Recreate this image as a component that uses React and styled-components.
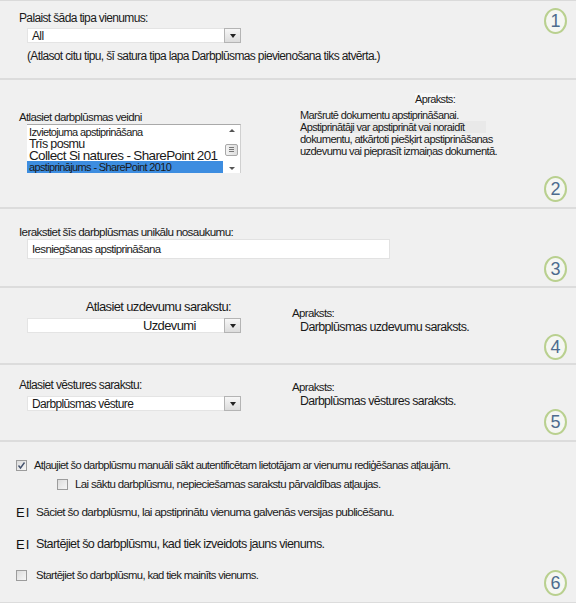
import React from "react";
import styled, { createGlobalStyle } from "styled-components";

const GlobalStyle = createGlobalStyle`
  html, body {
    margin: 0;
    padding: 0;
    background: #f0f0f0;
  }
  body {
    font-family: "Liberation Sans", Arial, sans-serif;
    letter-spacing: -0.04em;
    color: #1a1a1a;
  }
`;

const Page = styled.div`
  width: 576px;
  height: 603px;
  overflow: hidden;
  background: #f0f0f0;
  border-top: 1px solid #dadada;
  box-sizing: border-box;
`;

const Section = styled.section`
  position: relative;
  box-sizing: border-box;
  height: ${p => p.h}px;
  padding: ${p => p.pad || "0"};
  border-bottom: 2px solid #dcdcdc;
`;

const Badge = styled.div`
  position: absolute;
  right: 9px;
  ${p => (p.top ? `top: ${p.top}px;` : `bottom: ${p.bottom}px;`)}
  width: 19px;
  height: 22px;
  border: 2px solid #b9d08f;
  border-radius: 50%;
  background: #f5f6f2;
  color: #4d6c8e;
  font-size: 18px;
  line-height: 22px;
  letter-spacing: 0;
  text-align: center;
`;

const Label = styled.div`
  font-size: ${p => p.size || 12}px;
  line-height: ${p => p.lh || 14}px;
  margin: ${p => p.m || "0"};
  text-align: ${p => p.align || "left"};
  width: ${p => (p.w ? `${p.w}px` : "auto")};
  white-space: nowrap;
`;

const Select = styled.div`
  display: flex;
  align-items: center;
  box-sizing: border-box;
  width: ${p => p.w || 214}px;
  height: 15px;
  margin: ${p => p.m || "0 0 0 8px"};
  background: #fff;
  border: 1px solid #e4e4e4;
  font-size: ${p => p.size || 12}px;
`;

const SelectValue = styled.span`
  flex: 1;
  padding-left: ${p => p.pl || 4}px;
  white-space: nowrap;
  overflow: hidden;
`;

const ArrowBtn = styled.span`
  display: flex;
  align-items: center;
  justify-content: center;
  box-sizing: border-box;
  width: 17px;
  height: 15px;
  margin-right: -1px;
  border: 1px solid #b4b4b4;
  background: linear-gradient(#f7f7f7, #dcdcdc);
  &::after {
    content: "";
    border-left: 3px solid transparent;
    border-right: 3px solid transparent;
    border-top: 4px solid #222;
  }
`;

const TextBox = styled.div`
  box-sizing: border-box;
  width: 363px;
  height: 20px;
  margin-left: 8px;
  padding: 3px 4px;
  background: #fff;
  border: 1px solid #e2e2e2;
  font-size: 11.5px;
  line-height: 13px;
`;

const Columns = styled.div`
  display: grid;
  grid-template-columns: ${p => p.cols};
  align-items: start;
`;

const ListBox = styled.div`
  display: flex;
  box-sizing: border-box;
  width: 214px;
  height: 49px;
  margin-left: 8px;
  background: #fff;
  border-top: 1px solid #a9a9a9;
  border-right: 1px solid #d0d0d0;
`;

const Options = styled.div`
  flex: 1;
  display: flex;
  flex-direction: column;
  padding-top: 1px;
  overflow: hidden;
`;

const Option = styled.div`
  height: 12px;
  line-height: 12px;
  font-size: ${p => p.size}px;
  padding-left: 2px;
  white-space: nowrap;
  overflow: hidden;
  background: ${p => (p.selected ? "#3d8de0" : "transparent")};
`;

const ScrollBar = styled.div`
  width: 17px;
  display: flex;
  flex-direction: column;
  align-items: center;
  justify-content: space-between;
  padding: 4px 0 3px;
  box-sizing: border-box;
`;

const ScrollArrow = styled.span`
  border-left: 3px solid transparent;
  border-right: 3px solid transparent;
  ${p => (p.up ? "border-bottom: 3px solid #555;" : "border-top: 3px solid #555;")}
`;

const Thumb = styled.span`
  box-sizing: border-box;
  width: 13px;
  height: 12px;
  border: 1px solid #a8a8a8;
  border-radius: 2px;
  background: linear-gradient(90deg, #f2f2f2, #dedede);
  display: flex;
  flex-direction: column;
  justify-content: center;
  align-items: center;
  gap: 1px;
  & > i {
    display: block;
    width: 5px;
    height: 1px;
    background: #777;
  }
`;

const Desc = styled.div`
  font-size: ${p => p.size || 12}px;
  line-height: ${p => p.lh || 13}px;
  margin: ${p => p.m || "0"};
  white-space: nowrap;
`;

const Highlight = styled.span`
  background: ${p => p.bg};
  padding-right: ${p => p.pr || 0}px;
`;

const OptionRow = styled.div`
  display: flex;
  align-items: center;
  gap: ${p => p.gap || 7}px;
  height: ${p => p.h || 18}px;
  margin: ${p => p.m || "0"};
  font-size: ${p => p.size || 11.5}px;
  white-space: nowrap;
`;

const Check = styled.span`
  box-sizing: border-box;
  width: 11px;
  height: 11px;
  flex: none;
  border: 1px solid #9c9c9c;
  background: linear-gradient(135deg, #dcdcdc, #f6f6f6);
  display: flex;
  align-items: center;
  justify-content: center;
`;

const Glyph = styled.span`
  width: 13px;
  flex: none;
  font-size: 13px;
  letter-spacing: 1px;
  color: #111;
`;

const Checked = () => (
  <Check>
    <svg width="9" height="9" viewBox="0 0 9 9">
      <path d="M1.5 4.5 L3.5 7 L7.5 1.5" fill="none" stroke="#44526d" strokeWidth="1.4" />
    </svg>
  </Check>
);

export default function App() {
  return (
    <>
      <GlobalStyle />
      <Page>
        <Section h={79} pad="10px 0 0 19px">
          <Label>Palaist šāda tipa vienumus:</Label>
          <Select m="3px 0 0 8px">
            <SelectValue>All</SelectValue>
            <ArrowBtn />
          </Select>
          <Label m="6px 0 0 8px">(Atlasot citu tipu, šī satura tipa lapa Darbplūsmas pievienošana tiks atvērta.)</Label>
          <Badge top={7}>1</Badge>
        </Section>

        <Section h={129} pad="13px 0 0 19px">
          <Columns cols="281px 1fr">
            <div>
              <Label m="17px 0 0 0" size={11.5}>Atlasiet darbplūsmas veidni</Label>
              <ListBox>
                <Options>
                  <Option size={11}>Izvietojuma apstiprināšana</Option>
                  <Option size={12.5}>Trīs posmu</Option>
                  <Option size={13.5}>Collect Si natures - SharePoint 201</Option>
                  <Option size={11} selected>apstiprinājums - SharePoint 2010</Option>
                </Options>
                <ScrollBar>
                  <ScrollArrow up />
                  <Thumb><i /><i /><i /></Thumb>
                  <ScrollArrow />
                </ScrollBar>
              </ListBox>
            </div>
            <div>
              <Desc size={11} m="0 0 3px 115px">
                <Highlight bg="#f7f7f7">Apraksts:</Highlight>
              </Desc>
              <Desc size={11} lh={12}>Maršrutē dokumentu apstiprināšanai.</Desc>
              <Desc size={11} lh={12}>
                <Highlight bg="#e9e9e9" pr={22}>Apstiprinātāji var apstiprināt vai noraidīt</Highlight>
              </Desc>
              <Desc size={11.2} lh={12}>dokumentu, atkārtoti piešķirt apstiprināšanas</Desc>
              <Desc size={11.2} lh={12}>uzdevumu vai pieprasīt izmaiņas dokumentā.</Desc>
            </div>
          </Columns>
          <Badge bottom={5}>2</Badge>
        </Section>

        <Section h={79} pad="16px 0 0 19px">
          <Label size={11.7}>Ierakstiet šīs darbplūsmas unikālu nosaukumu:</Label>
          <TextBox>Iesniegšanas apstiprināšana</TextBox>
          <Badge bottom={4}>3</Badge>
        </Section>

        <Section h={77} pad="11px 0 0 19px">
          <Columns cols="273px 1fr">
            <div>
              <Label size={13} lh={16} align="right" w={212}>Atlasiet uzdevumu sarakstu:</Label>
              <Select m="3px 0 0 8px" size={13}>
                <SelectValue pl={115}>Uzdevumi</SelectValue>
                <ArrowBtn />
              </Select>
            </div>
            <div>
              <Desc size={11.5} m="8px 0 0 0">Apraksts:</Desc>
              <Desc size={12.5} lh={15} m="0 0 0 8px">Darbplūsmas uzdevumu saraksts.</Desc>
            </div>
          </Columns>
          <Badge bottom={3}>4</Badge>
        </Section>

        <Section h={77} pad="13px 0 0 19px">
          <Columns cols="273px 1fr">
            <div>
              <Label size={12}>Atlasiet vēstures sarakstu:</Label>
              <Select m="4px 0 0 8px" size={12}>
                <SelectValue>Darbplūsmas vēsture</SelectValue>
                <ArrowBtn />
              </Select>
            </div>
            <div>
              <Desc size={11.5} m="3px 0 0 0">Apraksts:</Desc>
              <Desc size={12.3} lh={15} m="0 0 0 8px">Darbplūsmas vēstures saraksts.</Desc>
            </div>
          </Columns>
          <Badge bottom={5}>5</Badge>
        </Section>

        <Section h={162} pad="14px 0 0 16px">
          <OptionRow size={11.2}>
            <Checked />
            Atļaujiet šo darbplūsmu manuāli sākt autentificētam lietotājam ar vienumu rediģēšanas atļaujām.
          </OptionRow>
          <OptionRow size={11.5} m="1px 0 0 41px">
            <Check />
            Lai sāktu darbplūsmu, nepieciešamas sarakstu pārvaldības atļaujas.
          </OptionRow>
          <OptionRow size={11.8} m="10px 0 0 0">
            <Glyph>EI</Glyph>
            Sāciet šo darbplūsmu, lai apstiprinātu vienuma galvenās versijas publicēšanu.
          </OptionRow>
          <OptionRow size={12.6} m="14px 0 0 0">
            <Glyph>EI</Glyph>
            Startējiet šo darbplūsmu, kad tiek izveidots jauns vienums.
          </OptionRow>
          <OptionRow size={11.3} m="13px 0 0 0" gap={9}>
            <Check />
            Startējiet šo darbplūsmu, kad tiek mainīts vienums.
          </OptionRow>
          <Badge bottom={6}>6</Badge>
        </Section>
      </Page>
    </>
  );
}
